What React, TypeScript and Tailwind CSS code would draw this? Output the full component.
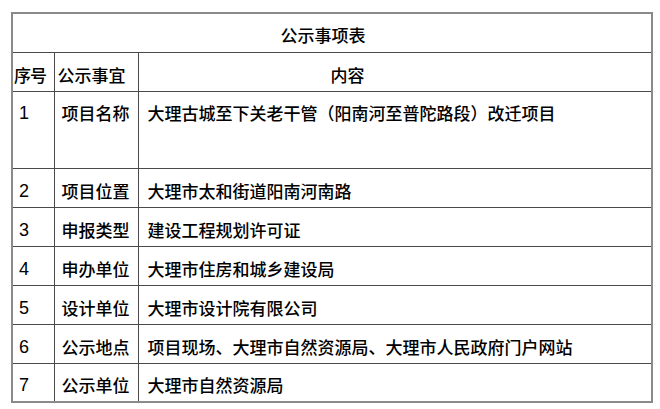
import React from 'react';

// 公示事项表 — notice table

interface Row {
  no: string;
  item: string;
  content: string;
  tall?: boolean;
}

const rows: Row[] = [
  { no: '1', item: '项目名称', content: '大理古城至下关老干管（阳南河至普陀路段）改迁项目', tall: true },
  { no: '2', item: '项目位置', content: '大理市太和街道阳南河南路' },
  { no: '3', item: '申报类型', content: '建设工程规划许可证' },
  { no: '4', item: '申办单位', content: '大理市住房和城乡建设局' },
  { no: '5', item: '设计单位', content: '大理市设计院有限公司' },
  { no: '6', item: '公示地点', content: '项目现场、大理市自然资源局、大理市人民政府门户网站' },
  { no: '7', item: '公示单位', content: '大理市自然资源局' },
];

const cjk = "font-['Noto_Sans_CJK_SC',sans-serif]";
const cell = 'border border-[#4a4a4a] p-0';

export default function App() {
  return (
    <div className={`w-[660px] h-[409px] bg-white text-black font-medium ${cjk}`}>
      <div className="pt-[12px] pl-[11px]">
        <table className="table-fixed border-collapse w-[642px] text-[17px] leading-[20px] border-2 border-[#8a8a8a]">
          <colgroup>
            <col className="w-[42px]" />
            <col className="w-[84px]" />
            <col />
          </colgroup>
          <tbody>
            <tr className="h-[39px]">
              <td colSpan={3} className={`${cell} text-center align-middle pt-[5px] pr-[18px]`}>
                公示事项表
              </td>
            </tr>
            <tr className="h-[39px]">
              <td className={`${cell} align-middle pt-[6px] pl-[1px] whitespace-nowrap tracking-[-1px]`}>序号</td>
              <td className={`${cell} align-middle pt-[6px] pl-[3px]`}>公示事宜</td>
              <td className={`${cell} align-middle pt-[6px] pl-[192px]`}>内容</td>
            </tr>
            {rows.map((r) => (
              <tr key={r.no} className={r.tall ? 'h-[77px]' : 'h-[39px]'}>
                <td
                  className={`${cell} pl-[6px] font-['Liberation_Sans_Narrow','Liberation_Sans',sans-serif] text-[18px] ${
                    r.tall ? 'align-top pt-[11px]' : 'align-middle pt-[6px]'
                  }`}
                >
                  {r.no}
                </td>
                <td className={`${cell} pl-[7px] ${r.tall ? 'align-top pt-[11px]' : 'align-middle pt-[6px]'}`}>
                  {r.item}
                </td>
                <td
                  className={`${cell} pl-[9px] whitespace-nowrap ${
                    r.tall ? 'align-top pt-[11px]' : 'align-middle pt-[6px]'
                  }`}
                >
                  {r.content}
                </td>
              </tr>
            ))}
          </tbody>
        </table>
      </div>
    </div>
  );
}
